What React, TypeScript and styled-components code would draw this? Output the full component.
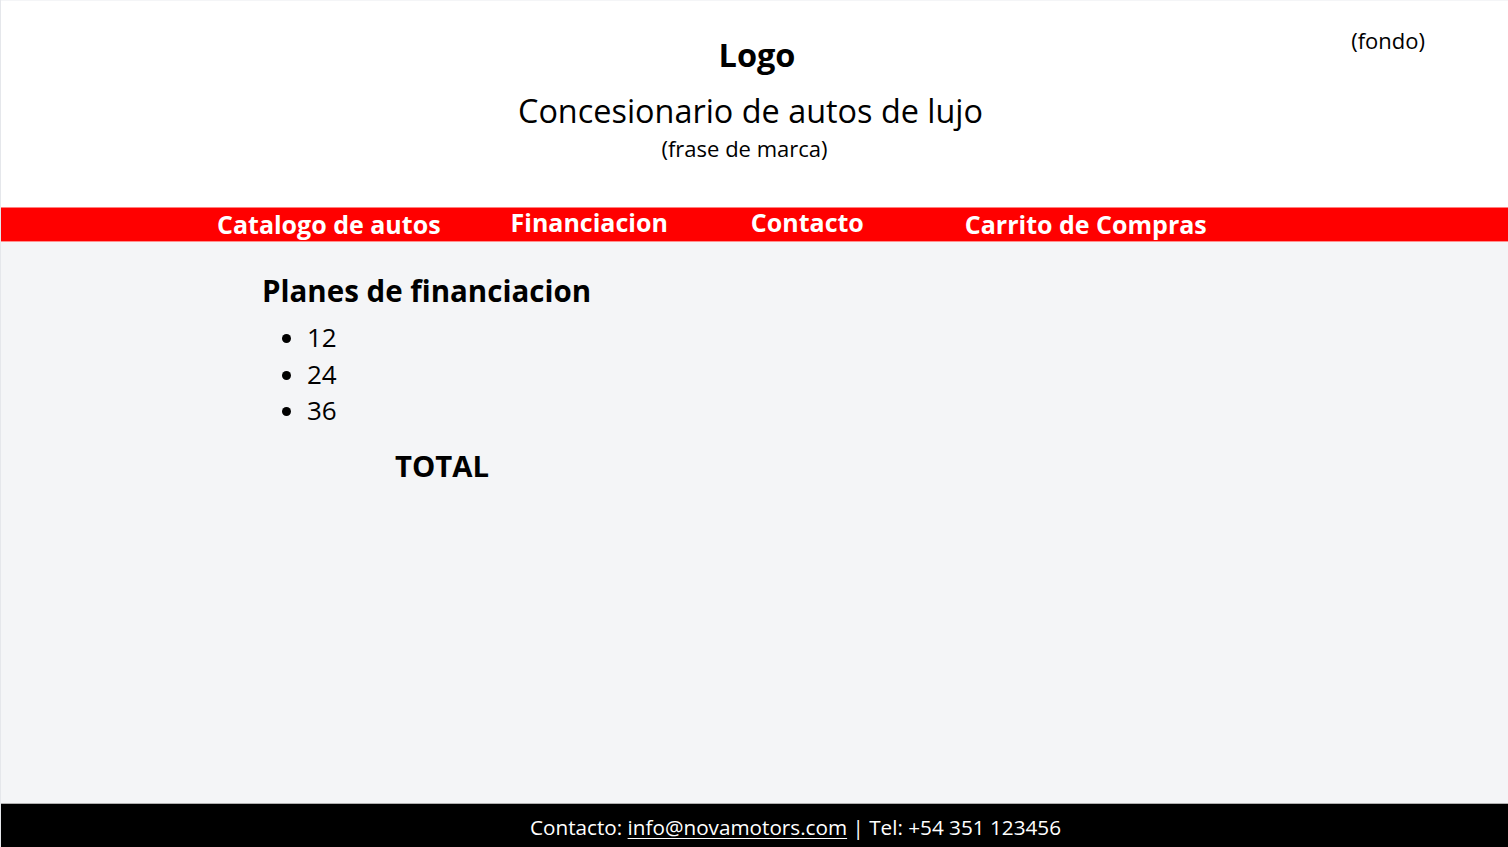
import React from 'react';
import styled, { createGlobalStyle } from 'styled-components';

const GlobalStyle = createGlobalStyle`
  html, body {
    margin: 0;
    padding: 0;
    height: 100%;
  }
  body {
    font-family: 'Open Sans', 'Liberation Sans', sans-serif;
    color: #000;
    background: #e5e7eb;
  }
  #root {
    height: 100%;
  }
`;

const Page = styled.div`
  box-sizing: border-box;
  height: 100%;
  margin-left: 1px;
  padding-top: 1px;
  display: flex;
  flex-direction: column;
  background: #f4f5f7;
`;

const Header = styled.header`
  position: relative;
  background: #fff;
  height: 206px;
  display: flex;
  flex-direction: column;
  align-items: center;
  padding-top: 32px;
  box-sizing: border-box;
`;

const Logo = styled.h1`
  margin: 0 0 0 5px;
  font-size: 32.5px;
  font-weight: 700;
  line-height: 44px;
`;

const Title = styled.h2`
  margin: 11px 0 0 -8px;
  font-size: 32.4px;
  font-weight: 400;
  line-height: 44px;
`;

const Tagline = styled.p`
  margin: 0 0 0 -20px;
  font-size: 22px;
  line-height: 32px;
`;

const Corner = styled.span`
  position: absolute;
  top: 24px;
  right: 83px;
  font-size: 22px;
`;

const NavBar = styled.nav`
  height: 35px;
  background: #ff0000;
  border-top: 1px solid #ff8080;
  border-bottom: 1px solid #ff9090;
  box-sizing: border-box;
  display: flex;
  align-items: center;
  padding-left: 216px;
`;

const NavItem = styled.a<{ $gap: number; $shift: number }>`
  color: #fff;
  font-size: 25px;
  font-weight: 700;
  text-decoration: none;
  margin-left: ${(p) => p.$gap}px;
  position: relative;
  top: ${(p) => p.$shift}px;
  white-space: nowrap;
`;

const Main = styled.main`
  flex: 1;
  padding: 28px 0 0 261px;
`;

const SectionTitle = styled.h3`
  margin: 0;
  font-size: 29.5px;
  font-weight: 700;
  line-height: 42px;
`;

const PlanList = styled.ul`
  margin: 7px 0 0 0;
  padding-left: 45px;
  font-size: 26px;
  line-height: 36.5px;
`;

const Total = styled.h3`
  margin: 16px 0 0 133px;
  font-size: 29.3px;
  font-weight: 700;
  line-height: 42px;
`;

const Footer = styled.footer`
  height: 44px;
  background: #000;
  color: #fff;
  border-top: 1px solid #b0b0b0;
  display: flex;
  justify-content: center;
  align-items: flex-end;
  padding: 0 0 6px 82px;
  box-sizing: border-box;
  font-size: 20.7px;
`;

const Mail = styled.a`
  color: #fff;
  text-decoration: underline;
  text-underline-offset: 3px;
  text-decoration-thickness: 1px;
`;

const links = [
  { label: 'Catalogo de autos', gap: 0, shift: -1 },
  { label: 'Financiacion', gap: 70, shift: -3 },
  { label: 'Contacto', gap: 83, shift: -3 },
  { label: 'Carrito de Compras', gap: 101, shift: -1 },
];

export default function App() {
  return (
    <>
      <GlobalStyle />
      <Page>
        <Header>
          <Logo>Logo</Logo>
          <Title>Concesionario de autos de lujo</Title>
          <Tagline>(frase de marca)</Tagline>
          <Corner>(fondo)</Corner>
        </Header>
        <NavBar>
          {links.map((l) => (
            <NavItem key={l.label} href="#" $gap={l.gap} $shift={l.shift}>
              {l.label}
            </NavItem>
          ))}
        </NavBar>
        <Main>
          <SectionTitle>Planes de financiacion</SectionTitle>
          <PlanList>
            <li>12</li>
            <li>24</li>
            <li>36</li>
          </PlanList>
          <Total>TOTAL</Total>
        </Main>
        <Footer>
          <span>
            Contacto: <Mail href="#">info@novamotors.com</Mail> | Tel: +54 351 123456
          </span>
        </Footer>
      </Page>
    </>
  );
}
